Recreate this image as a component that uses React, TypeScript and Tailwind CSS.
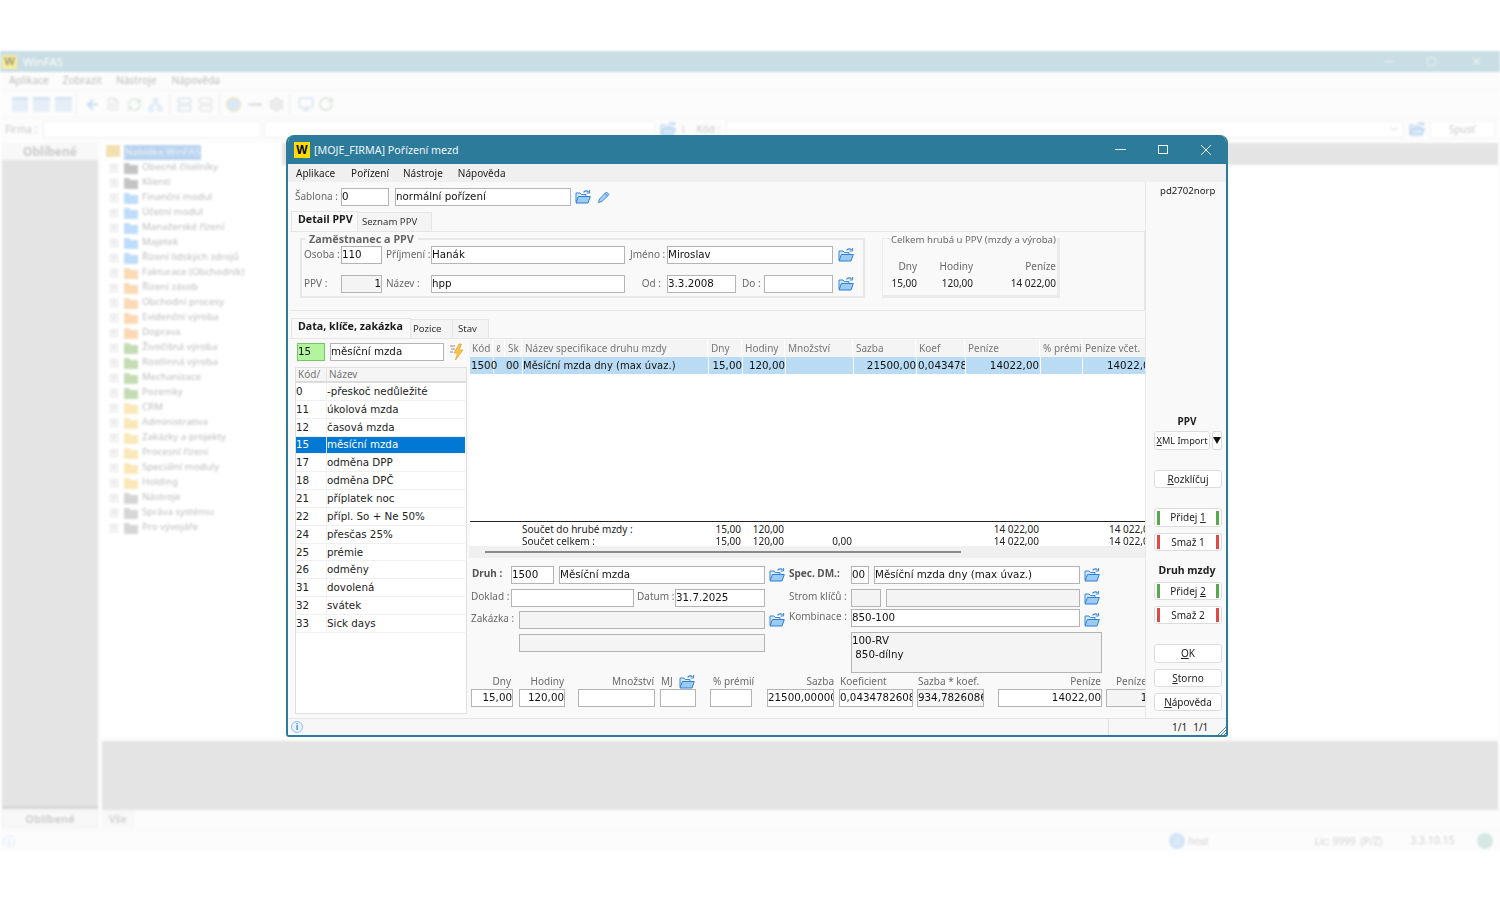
import React from "react";
import { ArrowLeft, FileText, RefreshCw, Network, Server, Settings, Monitor, RotateCw, ChevronDown, User } from "lucide-react";

const cx = (...a: (string | false | undefined)[]) => a.filter(Boolean).join(" ");

function FolderOpen({ className = "" }: { className?: string }) {
  return (
    <svg viewBox="0 0 16 16" className={cx("w-[16px] h-[16px] shrink-0", className)}>
      <path d="M1 13V4h4l1.3 1.5H11V7" fill="#d5e8fa" stroke="#3b86d6" strokeWidth="1" />
      <path d="M1 14 3.4 7.5H15.3L13 14Z" fill="#9ccbf3" stroke="#2f7fd2" strokeWidth="1" />
      <path d="M8.5 3.4C10 1.6 12 1.4 13.6 2.8" fill="none" stroke="#3b86d6" strokeWidth="1.1" />
      <path d="M14.6 1v3h-3" fill="none" stroke="#3b86d6" strokeWidth="1" />
    </svg>
  );
}

function Pencil() {
  return (
    <svg viewBox="0 0 14 14" className="w-[14px] h-[14px] ml-[6px] mt-[2px] shrink-0">
      <path d="M1.5 12.5 2.5 9 9.5 2l2.5 2.5-7 7Z" fill="#a9d0f4" stroke="#3b86d6" strokeWidth="1" />
      <path d="M8 3.5 10.5 6" stroke="#3b86d6" strokeWidth="1" />
    </svg>
  );
}

function Bolt() {
  return (
    <svg viewBox="0 0 16 18" className="w-[16px] h-[18px] ml-[5px] shrink-0">
      <path d="M1 3h5M2 6h4M1 9h3" stroke="#8a8a8a" strokeWidth="1" />
      <path d="M10 1 5 10h3.5L6.5 17 14 7h-4l2.5-6Z" fill="#f6c64a" stroke="#ea9c2e" strokeWidth="0.7" />
    </svg>
  );
}

function Input({ className = "", children, grey, right, green }: { className?: string; children?: React.ReactNode; grey?: boolean; right?: boolean; green?: boolean }) {
  return (
    <div
      className={cx(
        "h-[18px] shrink-0 overflow-hidden whitespace-nowrap border text-[10.3px] leading-[15px] text-[#111]",
        green ? "border-[#7bc46c] bg-[#b3f59f]" : grey ? "border-[#b4b4b4] bg-[#f4f4f4]" : "border-[#b4b4b4] bg-white",
        right && "text-right",
        className
      )}
    >
      {children}
    </div>
  );
}

function Label({ className = "", children, bold }: { className?: string; children: React.ReactNode; bold?: boolean }) {
  return (
    <div
      className={cx(
        "h-[15px] shrink-0 whitespace-nowrap text-[10px] leading-[15px] [font-family:'Noto_Sans',sans-serif]",
        bold ? "font-bold text-[#555]" : "text-[#6a6a6a]",
        className
      )}
    >
      {children}
    </div>
  );
}

function Tab({ active, className = "", children }: { active?: boolean; className?: string; children: React.ReactNode }) {
  return active ? (
    <div className={cx("h-[20px] whitespace-nowrap border-t border-l border-r border-[#e6e6e6] bg-[#f9f9f9] text-[10.7px] leading-[15px] font-bold text-[#1b1b1b] -mb-px [font-family:'Noto_Sans',sans-serif]", className)}>{children}</div>
  ) : (
    <div className={cx("h-[19px] mt-[1px] whitespace-nowrap border-t border-r border-[#e6e6e6] bg-[#f4f4f4] text-[9.6px] leading-[18px] text-[#333] [font-family:'Noto_Sans',sans-serif]", className)}>{children}</div>
  );
}

function Btn({ className = "", children, bar, small }: { className?: string; children: React.ReactNode; bar?: "g" | "r"; small?: boolean }) {
  const barCls = bar === "g" ? "bg-[#58a84e]" : "bg-[#e04848]";
  return (
    <div className={cx("flex h-[18px] items-center justify-center whitespace-nowrap rounded-[3px] border border-[#dcdcdc] bg-white text-[#222] [font-family:'Noto_Sans',sans-serif]", small ? "text-[9.2px]" : "text-[10px]", className)}>
      {bar && <span className={cx("w-[3px] h-[14px] ml-[2px]", barCls)} />}
      <span className="flex-1 text-center">{children}</span>
      {bar && <span className={cx("w-[3px] h-[14px] mr-[2px]", barCls)} />}
    </div>
  );
}

const listRows = [
  ["0", "-přeskoč nedůležité"],
  ["11", "úkolová mzda"],
  ["12", "časová mzda"],
  ["15", "měsíční mzda"],
  ["17", "odměna DPP"],
  ["18", "odměna DPČ"],
  ["21", "příplatek noc"],
  ["22", "přípl. So + Ne 50%"],
  ["24", "přesčas 25%"],
  ["25", "prémie"],
  ["26", "odměny"],
  ["31", "dovolená"],
  ["32", "svátek"],
  ["33", "Sick days"],
];

const gridCols = "grid grid-cols-[24px_12px_17px_186px_34px_43px_68px_63px_49px_75px_42px_64px]";
const headers = ["Kód", "ℓ", "Sk", "Název specifikace druhu mzdy", "Dny", "Hodiny", "Množství", "Sazba", "Koef", "Peníze", "% prémi", "Peníze včet."];

function Dialog() {
  return (
    <div className="absolute left-[286px] top-[135px] flex h-[602px] w-[942px] flex-col overflow-hidden rounded-t-[8px] rounded-b-[3px] border-x-2 border-b-2 border-[#2c7b9b] bg-[#f9f9f9] [font-family:'DejaVu_Sans',sans-serif] blur-[0.3px]">
      {/* title */}
      <div className="flex h-[29px] shrink-0 items-center bg-[#2c7b9b] text-white">
        <div className="ml-[6px] flex h-[16px] w-[16px] items-center justify-center bg-[#ffdc00] text-[12px] font-bold leading-none text-black [font-family:'Liberation_Sans',sans-serif]">W</div>
        <div className="ml-[4px] mt-[1px] text-[10.7px] text-[#eef6f9] [font-family:'Noto_Sans',sans-serif]">[MOJE_FIRMA] Pořízení mezd</div>
        <div className="ml-auto flex items-center">
          <div className="h-[1px] w-[11px] bg-[#dfeef3]" />
          <div className="ml-[32px] h-[9px] w-[10px] border border-[#eef6f9]" />
          <svg viewBox="0 0 10 10" className="ml-[33px] mr-[15px] h-[10px] w-[10px]"><path d="M0 0 10 10M10 0 0 10" stroke="#eef6f9" strokeWidth="1" /></svg>
        </div>
      </div>
      {/* menu */}
      <div className="flex h-[18px] shrink-0 items-center bg-[#f0f0f0] pl-[8px] pt-[1px] text-[10px] text-[#222] [font-family:'Noto_Sans',sans-serif]">
        <span>Aplikace</span>
        <span className="ml-[16px]">Pořízení</span>
        <span className="ml-[14px]">Nástroje</span>
        <span className="ml-[15px]">Nápověda</span>
      </div>
      {/* main */}
      <div className="flex h-[536px] shrink-0">
        <div className="flex w-[858px] shrink-0 flex-col border-r border-[#e8e8e8]">
          <div className="mt-[6px] flex items-start">
            <Label className="ml-[7px] mt-[1px] w-[46px]">Šablona :</Label>
            <Input className="w-[48px]">0</Input>
            <Input className="ml-[6px] w-[176px]">normální pořízení</Input>
            <FolderOpen className="ml-[4px] mt-[1px]" />
            <Pencil />
          </div>
          <div className="ml-[3px] mt-[5px] flex">
            <Tab active className="w-[67px] pl-[6px]">Detail PPV</Tab>
            <Tab className="w-[74px] pl-[4px]">Seznam PPV</Tab>
          </div>
          {/* panel 1 */}
          <div className="ml-[2px] flex h-[80px] shrink-0 items-start border-y border-r border-[#e6e6e6]">
            <fieldset className="ml-[10px] h-[66px] w-[565px] border-2 border-[#e8e8e8] pl-[2px]">
              <legend className="ml-[1px] h-[13px] whitespace-nowrap px-[4px] text-[10.8px] font-bold leading-[13px] text-[#666] [font-family:'Noto_Sans',sans-serif]">Zaměstnanec a PPV</legend>
              <div className="flex items-start pt-[1px]">
                <Label className="mt-[1px] w-[37px]">Osoba :</Label>
                <Input className="w-[41px]">110</Input>
                <Label className="ml-[4px] mt-[1px] w-[45px]">Příjmení :</Label>
                <Input className="w-[194px]">Hanák</Input>
                <Label className="ml-[5px] mt-[1px] w-[37px]">Jméno :</Label>
                <Input className="w-[166px]">Miroslav</Input>
                <FolderOpen className="ml-[5px] mt-[1px]" />
              </div>
              <div className="mt-[11px] flex items-start">
                <Label className="mt-[1px] w-[37px]">PPV :</Label>
                <Input grey right className="w-[41px]">1</Input>
                <Label className="ml-[4px] mt-[1px] w-[45px]">Název :</Label>
                <Input className="w-[194px]">hpp</Input>
                <Label className="mt-[1px] w-[39px] pr-[3px] text-right">Od :</Label>
                <Input className="ml-[3px] w-[69px]">3.3.2008</Input>
                <Label className="ml-[6px] mt-[1px] w-[22px]">Do :</Label>
                <Input className="w-[69px]">&nbsp;</Input>
                <FolderOpen className="ml-[5px] mt-[1px]" />
              </div>
            </fieldset>
            <fieldset className="ml-[17px] h-[66px] w-[178px] border-l border-t border-r-[3px] border-b-[3px] border-[#ececec] text-[10px] [font-family:'Noto_Sans',sans-serif]">
              <legend className="ml-[8px] h-[13px] whitespace-nowrap text-[9.6px] leading-[15px] text-[#6a6a6a]">Celkem hrubá u PPV (mzdy a výroba)</legend>
              <div className="mt-[14px] flex text-[#6a6a6a]">
                <span className="w-[34px] text-right">Dny</span>
                <span className="w-[56px] text-right">Hodiny</span>
                <span className="w-[83px] text-right">Peníze</span>
              </div>
              <div className="mt-[2px] flex text-[#222]">
                <span className="w-[34px] text-right">15,00</span>
                <span className="w-[56px] text-right">120,00</span>
                <span className="w-[83px] text-right">14 022,00</span>
              </div>
            </fieldset>
          </div>
          <div className="ml-[3px] mt-[7px] flex">
            <Tab active className="w-[120px] pl-[6px]">Data, klíče, zakázka</Tab>
            <Tab className="w-[42px] pl-[2px]">Pozice</Tab>
            <Tab className="w-[36px] pl-[5px]">Stav</Tab>
          </div>
          {/* panel 2 */}
          <div className="ml-[2px] flex min-h-0 flex-1 border-t border-[#e6e6e6]">
            <div className="flex w-[179px] shrink-0 flex-col">
              <div className="mt-[4px] flex items-start">
                <Input green className="ml-[7px] w-[28px]">15</Input>
                <Input className="ml-[5px] w-[114px]">měsíční mzda</Input>
                <Bolt />
              </div>
              <div className="ml-[5px] mt-[6px] h-[347px] w-[172px] border border-[#e0e0e0] bg-white">
                <div className="flex h-[15px] items-center border-b-2 border-[#dcdcdc] bg-[#f5f5f5] text-[10px] text-[#777] [font-family:'Noto_Sans',sans-serif]">
                  <span className="w-[31px] border-r border-[#e4e4e4] pl-[2px]">Kód/</span>
                  <span className="pl-[2px]">Název</span>
                </div>
                {listRows.map(([k, n]) => {
                  const sel = k === "15";
                  return (
                    <div key={k} className={cx("mr-[1px] flex h-[17.85px] items-center border-b border-[#efefef] text-[10.3px] leading-[17px]", sel ? "bg-[#0078d4] text-white" : "text-[#222]")}>
                      <span className="w-[31px] border-r border-[#f0f0f0]">{k}</span>
                      <span>{n}</span>
                    </div>
                  );
                })}
              </div>
            </div>
            <div className="flex min-w-0 flex-1 flex-col overflow-hidden pt-[1px]">
              <div className={cx(gridCols, "h-[17px] bg-[#f4f4f4] text-[10px] leading-[17px] text-[#777] [font-family:'Noto_Sans',sans-serif]")}>
                {headers.map((h, i) => (
                  <div key={i} className="overflow-hidden whitespace-nowrap border-r border-[#ffffff] pl-[3px]">{h}</div>
                ))}
              </div>
              <div className={cx(gridCols, "ml-[1px] h-[17px] bg-[#b9dcf4] text-[10.3px] leading-[17px] text-[#111]")}>
                <div className="pl-[1px] border-r border-white">1500</div>
                <div className="col-span-2 pl-[12px] border-r border-white">00</div>
                <div className="overflow-hidden whitespace-nowrap border-r border-white text-[10px]">Měsíční mzda dny (max úvaz.)</div>
                <div className="border-r border-white text-right">15,00</div>
                <div className="border-r border-white text-right">120,00</div>
                <div className="border-r border-white"></div>
                <div className="border-r border-white text-right">21500,00</div>
                <div className="overflow-hidden whitespace-nowrap pl-[1px] border-r border-white">0,0434782</div>
                <div className="border-r border-white pr-[1px] text-right">14022,00</div>
                <div className="border-r border-white"></div>
                <div className="overflow-hidden whitespace-nowrap pl-[24px]">14022,00</div>
              </div>
              <div className="h-[147px] shrink-0 bg-white" />
              <div className="ml-[1px] h-[25px] shrink-0 border-t border-[#222] bg-white pt-[1px] text-[10px] leading-[12px] text-[#222] [font-family:'Noto_Sans',sans-serif]">
                <div className={cx(gridCols, "-ml-[1px]")}>
                  <div className="col-span-4 whitespace-nowrap pl-[53px]">Součet do hrubé mzdy :</div>
                  <div className="pr-[1px] text-right">15,00</div>
                  <div className="pr-[1px] text-right">120,00</div>
                  <div /><div /><div />
                  <div className="pr-[1px] text-right">14 022,00</div>
                  <div />
                  <div className="overflow-hidden whitespace-nowrap pl-[27px]">14 022,00</div>
                </div>
                <div className={cx(gridCols, "-ml-[1px]")}>
                  <div className="col-span-4 whitespace-nowrap pl-[53px]">Součet celkem :</div>
                  <div className="pr-[1px] text-right">15,00</div>
                  <div className="pr-[1px] text-right">120,00</div>
                  <div className="pr-[1px] text-right">0,00</div>
                  <div /><div />
                  <div className="pr-[1px] text-right">14 022,00</div>
                  <div />
                  <div className="overflow-hidden whitespace-nowrap pl-[27px]">14 022,00</div>
                </div>
              </div>
              <div className="flex h-[12px] shrink-0 items-center bg-[#f0f0f0] pl-[16px]">
                <div className="h-[2px] w-[476px] bg-[#8a8a8a]" />
              </div>
              {/* form */}
              <div className="mt-[8px] flex items-start">
                <Label bold className="ml-[3px] w-[39px]">Druh :</Label>
                <Input className="w-[43px]">1500</Input>
                <Input className="ml-[5px] w-[206px]">Měsíční mzda</Input>
                <FolderOpen className="ml-[4px] mt-[1px]" />
                <Label bold className="ml-[4px] w-[62px]">Spec. DM.:</Label>
                <Input className="w-[18px]">00</Input>
                <Input className="ml-[5px] w-[206px]">Měsíční mzda dny (max úvaz.)</Input>
                <FolderOpen className="ml-[4px] mt-[1px]" />
              </div>
              <div className="mt-[5px] flex items-start">
                <Label className="ml-[2px] w-[40px]">Doklad :</Label>
                <Input className="w-[123px]">&nbsp;</Input>
                <Label className="ml-[3px] w-[38px]">Datum :</Label>
                <Input className="w-[90px]">31.7.2025</Input>
                <Label className="ml-[24px] w-[62px]">Strom klíčů :</Label>
                <Input grey className="w-[30px]">&nbsp;</Input>
                <Input grey className="ml-[5px] w-[194px]">&nbsp;</Input>
                <FolderOpen className="ml-[4px] mt-[1px]" />
              </div>
              <div className="mt-[4px] flex items-start">
                <Label className="ml-[2px] w-[48px]">Zakázka :</Label>
                <Input grey className="w-[246px]">&nbsp;</Input>
                <FolderOpen className="ml-[4px] mt-[1px]" />
                <Label className="ml-[4px] -mt-[2px] w-[62px]">Kombinace :</Label>
                <Input className="-mt-[2px] w-[229px]">850-100</Input>
                <FolderOpen className="ml-[4px] mt-[1px]" />
              </div>
              <div className="mt-[3px] flex items-start">
                <Input grey className="ml-[50px] mt-[2px] w-[246px]">&nbsp;</Input>
                <Input grey className="ml-[86px] h-[41px]! w-[251px] whitespace-pre! leading-[14px]!">{"100-RV\n 850-dílny"}</Input>
              </div>
              <div className="mt-[1px] flex h-[15px] items-center overflow-hidden">
                <Label className="ml-[2px] w-[40px] text-right">Dny</Label>
                <Label className="ml-[8px] w-[45px] text-right">Hodiny</Label>
                <Label className="ml-[14px] w-[76px] text-right">Množství</Label>
                <Label className="ml-[7px] w-[18px]">MJ</Label>
                <FolderOpen className="w-[15px] h-[15px]" />
                <Label className="ml-[18px] w-[40px]">% prémií</Label>
                <Label className="ml-[15px] w-[66px] text-right">Sazba</Label>
                <Label className="ml-[6px] w-[74px]">Koeficient</Label>
                <Label className="ml-[4px] w-[67px]">Sazba * koef.</Label>
                <Label className="ml-[14px] w-[102px] text-right">Peníze</Label>
                <Label className="ml-[15px] w-[31px] overflow-hidden">Peníze</Label>
              </div>
              <div className="flex items-start overflow-hidden">
                <Input right className="ml-[2px] w-[42px]">15,00</Input>
                <Input right className="ml-[6px] w-[46px]">120,00</Input>
                <Input className="ml-[13px] w-[77px]">&nbsp;</Input>
                <Input className="ml-[5px] w-[36px]">&nbsp;</Input>
                <Input className="ml-[14px] w-[42px]">&nbsp;</Input>
                <Input className="ml-[15px] w-[67px]">21500,00000</Input>
                <Input className="ml-[5px] w-[74px]">0,0434782608</Input>
                <Input grey className="ml-[4px] w-[67px]">934,7826086</Input>
                <Input right className="ml-[14px] w-[104px]">14022,00</Input>
                <Input grey right className="ml-[4px] w-[85px]">14022,00</Input>
              </div>
            </div>
          </div>
        </div>
        {/* right */}
        <div className="flex w-[80px] shrink-0 flex-col pl-[2px] text-[10px] [font-family:'Noto_Sans',sans-serif]">
          <div className="ml-[12px] mt-[2px] h-[14px] text-[9.6px] leading-[14px] text-[#222]">pd2702norp</div>
          <div className="mt-[216px] h-[14px] text-center font-bold leading-[14px] text-[#222]">PPV</div>
          <div className="ml-[6px] mt-[3px] flex">
            <Btn small className="h-[19px] w-[56px]"><u>X</u>ML Import</Btn>
            <div className="ml-[2px] flex h-[19px] w-[10px] items-center justify-center rounded-[2px] border border-[#dcdcdc] bg-white">
              <svg viewBox="0 0 8 7" className="h-[7px] w-[8px]"><path d="M0 0H8L4 7Z" fill="#111" /></svg>
            </div>
          </div>
          <Btn className="ml-[6px] mt-[20px] w-[68px]"><u>R</u>ozklíčuj</Btn>
          <Btn bar="g" className="ml-[6px] mt-[20px] h-[19px] w-[68px]">Přidej <u>1</u></Btn>
          <Btn bar="r" className="ml-[6px] mt-[6px] w-[68px]">Smaž 1</Btn>
          <div className="mt-[12px] h-[14px] text-center text-[10.5px] font-bold leading-[14px] text-[#222]">Druh mzdy</div>
          <Btn bar="g" className="ml-[6px] mt-[5px] w-[68px]">Přidej <u>2</u></Btn>
          <Btn bar="r" className="ml-[6px] mt-[6px] w-[68px]">Smaž 2</Btn>
          <Btn className="ml-[6px] mt-[20px] h-[19px] w-[68px]"><u>O</u>K</Btn>
          <Btn className="ml-[6px] mt-[6px] w-[68px]"><u>S</u>torno</Btn>
          <Btn className="ml-[6px] mt-[6px] w-[68px]"><u>N</u>ápověda</Btn>
        </div>
      </div>
      {/* status */}
      <div className="relative flex h-[17px] shrink-0 items-center border-t border-[#e4e4e4] bg-[#f7f7f7] text-[10px] text-[#222] [font-family:'Noto_Sans',sans-serif]">
        <div className="ml-[3px] flex h-[12px] w-[12px] items-center justify-center rounded-full border border-[#8fc0ee] bg-[#e9f3fc] text-[8px] font-bold leading-none text-[#2f7fd2]">i</div>
        <div className="ml-[805px] h-[16px] border-l border-[#e0e0e0]" />
        <span className="ml-[63px]">1/1</span>
        <span className="ml-[6px]">1/1</span>
        <svg viewBox="0 0 8 8" className="absolute bottom-0 right-0 h-[8px] w-[8px]"><path d="M8 0 0 8M8 3 3 8M8 6 6 8" stroke="#4a8aa6" strokeWidth="1" /></svg>
      </div>
    </div>
  );
}

const treeRows: [string, string][] = [
  ["Obecné číselníky", "#c4c4c4"],
  ["Klienti", "#c4c4c4"],
  ["Finanční modul", "#bfdcfa"],
  ["Účetní modul", "#bfdcfa"],
  ["Manažerské řízení", "#bfdcfa"],
  ["Majetek", "#bfdcfa"],
  ["Řízení lidských zdrojů", "#bfdcfa"],
  ["Fakturace (Obchodník)", "#fbd9b5"],
  ["Řízení zásob", "#fbd9b5"],
  ["Obchodní procesy", "#fbd9b5"],
  ["Evidenční výroba", "#fbd9b5"],
  ["Doprava", "#fbd9b5"],
  ["Živočišná výroba", "#c4dcb4"],
  ["Rostlinná výroba", "#c4dcb4"],
  ["Mechanizace", "#c4dcb4"],
  ["Pozemky", "#c4dcb4"],
  ["CRM", "#fbe8b8"],
  ["Administrativa", "#fbe8b8"],
  ["Zakázky a projekty", "#fbe8b8"],
  ["Procesní řízení", "#fbe8b8"],
  ["Speciální moduly", "#fbe8b8"],
  ["Holding", "#fbe8b8"],
  ["Nástroje", "#d6d6d6"],
  ["Správa systému", "#d6d6d6"],
  ["Pro vývojáře", "#d6d6d6"],
];

function TreeFolder({ color }: { color: string }) {
  return (
    <svg viewBox="0 0 14 12" className="h-[12px] w-[14px] shrink-0">
      <path d="M0 1h5l1.5 2H14v9H0Z" style={{ fill: color }} />
    </svg>
  );
}

function Background() {
  return (
    <div className="flex h-[800px] flex-col bg-[#fcfcfc] blur-[1px] [font-family:'Noto_Sans',sans-serif]">
      <div className="flex h-[21px] shrink-0 items-center bg-[#c9dde4]">
        <div className="ml-[2px] flex h-[14px] w-[15px] items-center justify-center bg-[#f8eca0] text-[11px] font-bold text-[#a09a70]">W</div>
        <span className="ml-[6px] text-[11.5px] text-white">WinFAS</span>
        <div className="ml-auto flex items-center">
          <div className="h-[1px] w-[10px] bg-[#e9f2f5]" />
          <div className="ml-[33px] h-[9px] w-[9px] rounded-[2px] border border-[#e9f2f5]" />
          <div className="ml-[35px] mr-[18px] text-[13px] leading-none text-[#e9f2f5]">✕</div>
        </div>
      </div>
      <div className="flex h-[18px] shrink-0 items-center pl-[9px] text-[10.2px] text-[#bcbcbc]">
        <span>Aplikace</span>
        <span className="ml-[14px]">Zobrazit</span>
        <span className="ml-[14px]">Nástroje</span>
        <span className="ml-[15px]">Nápověda</span>
      </div>
      <div className="flex h-[28px] shrink-0 items-center border-y border-[#f6f6f6] pl-[12px]">
        <div className="h-[15px] w-[16px] border-t-[3px] border-[#d6e4f2] bg-[#e6eff7]" />
        <div className="ml-[5px] h-[15px] w-[17px] border-t-[3px] border-[#d6e4f2] bg-[#e6eff7]" />
        <div className="ml-[5px] h-[15px] w-[17px] border-t-[3px] border-[#d6e4f2] bg-[#e6eff7]" />
        <div className="ml-[4px] h-[20px] border-l border-[#ececec]" />
        <ArrowLeft size={15} strokeWidth={3} className="ml-[8px] text-[#c4ddf4]" />
        <FileText size={14} className="ml-[6px] text-[#e2e2e2]" />
        <RefreshCw size={15} className="ml-[7px] text-[#d0e6d2]" />
        <Network size={15} className="ml-[6px] text-[#d0e4f4]" />
        <div className="ml-[6px] h-[20px] border-l border-[#ececec]" />
        <Server size={15} className="ml-[7px] text-[#d4dfe8]" />
        <Server size={15} className="ml-[6px] text-[#e4e4e4]" />
        <div className="ml-[6px] h-[20px] border-l border-[#ececec]" />
        <div className="ml-[6px] h-[15px] w-[15px] rounded-full border border-[#f3e3a8] bg-[#dbe9f7]" />
        <div className="ml-[7px] h-[3px] w-[14px] bg-[#e2e2e2]" />
        <Settings size={15} strokeWidth={3} className="ml-[7px] text-[#e2e2e2]" />
        <div className="ml-[5px] h-[20px] border-l border-[#ececec]" />
        <Monitor size={16} className="ml-[8px] text-[#d2e2f5]" />
        <RotateCw size={16} className="ml-[4px] text-[#d0e6cc]" />
      </div>
      <div className="flex h-[22px] shrink-0 items-center text-[10px] text-[#c8c8c8]">
        <span className="ml-[5px] w-[38px]">Firma :</span>
        <div className="h-[17px] w-[218px] border border-[#f0f0f0] bg-white" />
        <div className="ml-[3px] h-[17px] w-[391px] border border-[#f0f0f0] bg-white" />
        <FolderOpen className="ml-[5px] opacity-40" />
        <span className="ml-[6px]">i</span>
        <span className="ml-[12px] w-[29px]">Kód :</span>
        <div className="flex h-[17px] w-[678px] items-center justify-end border border-[#f0f0f0] bg-white pr-[3px]"><ChevronDown size={12} className="text-[#ccc]" /></div>
        <FolderOpen className="ml-[5px] opacity-40" />
        <div className="ml-[5px] flex h-[17px] w-[65px] items-center justify-center border border-[#f4f4f4] bg-white">Spusť</div>
      </div>
      <div className="mt-[3px] flex min-h-0 flex-1 pl-[2px] pr-[2px]">
        <div className="flex w-[96px] shrink-0 flex-col">
          <div className="flex h-[17px] items-center justify-center bg-[#f8f8f8] text-[12px] font-bold text-[#cacaca]">Oblíbené</div>
          <div className="flex-1 border-b-[3px] border-[#d6d6d6] bg-[#e4e4e4]" />
          <div className="mb-[2px] mt-[1px] flex h-[18px] items-center justify-center border border-[#f0f0f0] bg-[#f8f8f8] text-[11px] font-bold text-[#cfcfcf]">Oblíbené</div>
        </div>
        <div className="ml-[4px] flex min-w-0 flex-1 flex-col">
          <div className="h-[594px] shrink-0 bg-white">
            <div className="h-[22px] bg-[#e4e4e4]">
              <div className="flex h-[22px] w-[180px] items-start bg-white pl-[4px] pt-[2px]">
                <div className="h-[12px] w-[14px] bg-[#f3e0b0]" />
                <span className="ml-[4px] bg-[#b9d3ef] px-[1px] text-[9.8px] text-[#eaf1f8]">Nabídka WinFAS</span>
              </div>
            </div>
            <div className="-mt-[5px]">
              {treeRows.map(([t, c]) => (
                <div key={t} className="flex h-[15px] items-center pl-[8px] text-[9.7px] text-[#bcbcbc]">
                  <span className="flex h-[8px] w-[8px] items-center justify-center border border-[#e0e0e0] text-[8px] leading-none">+</span>
                  <span className="ml-[6px]"><TreeFolder color={c} /></span>
                  <span className="ml-[4px] whitespace-nowrap">{t}</span>
                </div>
              ))}
            </div>
          </div>
          <div className="mt-[4px] h-[69px] shrink-0 bg-[#e4e4e4]" />
          <div className="flex h-[18px] shrink-0 items-center"><span className="w-[33px] bg-[#f8f8f8] pl-[7px] text-[10px] font-bold leading-[18px] text-[#d4d4d4]">Vše</span></div>
        </div>
      </div>
      <div className="flex h-[21px] shrink-0 items-center border-t border-[#f6f6f6] text-[10px] text-[#d0d0d0]">
        <div className="ml-[3px] flex h-[12px] w-[12px] items-center justify-center rounded-full border border-[#dbeafb] text-[8px] text-[#bcd8f4]">i</div>
        <div className="ml-[1154px] flex h-[16px] w-[16px] items-center justify-center rounded-full bg-[#d2e4f8]"><User size={11} className="text-[#eef5fc]" /></div>
        <span className="ml-[3px]">host</span>
        <span className="ml-[106px] whitespace-pre">Lic: 9999  (P/Z)</span>
        <span className="ml-[28px] text-[10.5px]">3.3.10.15</span>
        <div className="ml-[22px] h-[16px] w-[16px] rounded-full bg-[#d5e8e4]" />
      </div>
    </div>
  );
}

export default function App() {
  return (
    <div className="relative h-[900px] w-[1500px] overflow-hidden bg-white pt-[51px]">
      <Background />
      <Dialog />
    </div>
  );
}
